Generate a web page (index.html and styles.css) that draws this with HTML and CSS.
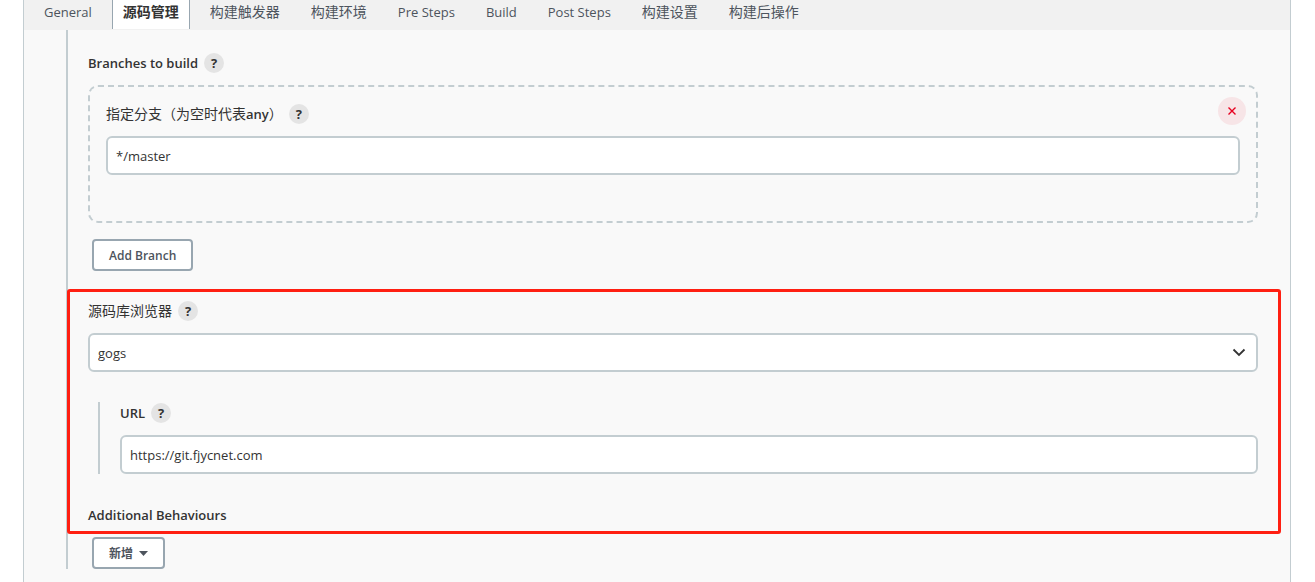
FILE: index.html
```
<!DOCTYPE html>
<html lang="zh-CN">
<head>
  <meta charset="UTF-8">
  <meta name="viewport" content="width=device-width, initial-scale=1.0">
  <title>源码管理</title>
  <link rel="stylesheet" href="styles.css">
</head>
<body>
  <main class="panel">
    <nav class="tabs">
      <a class="tab" href="#">General</a>
      <a class="tab tab-zh active" href="#">源码管理</a>
      <a class="tab tab-zh" href="#">构建触发器</a>
      <a class="tab tab-zh" href="#">构建环境</a>
      <a class="tab" href="#">Pre Steps</a>
      <a class="tab" href="#">Build</a>
      <a class="tab" href="#">Post Steps</a>
      <a class="tab tab-zh" href="#">构建设置</a>
      <a class="tab tab-zh" href="#">构建后操作</a>
    </nav>

    <form class="scm">
      <div class="label-row">
        <span class="label">Branches to build</span>
        <a class="help" href="#">?</a>
      </div>

      <div class="branch">
        <button class="delete" type="button" aria-label="Delete">
          <svg width="8" height="8" viewBox="0 0 8 8"><path d="M0.5 0.5 L7.5 7.5 M7.5 0.5 L0.5 7.5" stroke="#e6001f" stroke-width="1.4" fill="none"/></svg>
        </button>
        <div class="label-row">
          <label class="label" for="branch"><span class="zh">指定分支（为空时代表</span>any<span class="zh">）</span></label>
          <a class="help" href="#">?</a>
        </div>
        <input class="field" type="text" id="branch" value="*/master">
      </div>

      <button class="btn" type="button">Add Branch</button>

      <!-- repository browser -->
      <section class="browser">
        <div class="label-row">
          <label class="label" for="browser"><span class="zh">源码库浏览器</span></label>
          <a class="help" href="#">?</a>
        </div>
        <div class="select-wrap">
          <select class="field" id="browser">
            <option>gogs</option>
          </select>
          <svg class="chevron" width="14" height="9" viewBox="0 0 14 9"><path d="M1.5 1.5 L7 7 L12.5 1.5" stroke="#333" stroke-width="1.8" fill="none"/></svg>
        </div>

        <div class="nested">
          <div class="label-row">
            <label class="label" for="url">URL</label>
            <a class="help" href="#">?</a>
          </div>
          <input class="field" type="text" id="url" value="https://git.fjycnet.com">
        </div>

        <div class="label-row">
          <span class="label">Additional Behaviours</span>
        </div>
        <div class="highlight"></div>
      </section>

      <button class="btn" type="button">新增
        <svg width="9" height="5" viewBox="0 0 9 5"><path d="M0 0 H9 L4.5 5 Z" fill="#4d545d"/></svg>
      </button>
    </form>
  </main>
</body>
</html>
```
FILE: styles.css
```
* {
  box-sizing: border-box;
}
body {
  margin: 0;
  font-family: "Open Sans", "Noto Sans CJK SC", sans-serif;
  font-size: 13px;
  color: #333;
  background: #fff;
}
.panel {
  margin: 0 24px 0 23px;
  min-height: 100vh;
  background: #f9f9f9;
  border: solid #c3cdd1;
  border-width: 0 1px;
}

/* tabs */
.tabs {
  display: flex;
  gap: 9px;
  height: 30px;
  padding: 0 9px 1px;
  background: #f1f1f1;
}
.tab {
  padding: 0 10px;
  border: solid transparent;
  border-width: 0 1px;
  line-height: 24px;
  color: #4d545d;
  text-decoration: none;
  white-space: nowrap;
}
.tab-zh {
  font-size: 14px;
}
.tab.active {
  background: #fff;
  border-color: #98a6b0;
  color: #333;
  font-weight: 700;
}

/* form */
.scm {
  margin-left: 42px;
  margin-right: 32px;
  padding: 23px 0 0 20px;
  border-left: 2px solid #c3cdd1;
}
.label-row {
  display: flex;
  align-items: center;
  gap: 6px;
  height: 20px;
}
.label {
  font-weight: 600;
  line-height: 20px;
}
.zh {
  font-size: 14px;
  font-weight: 400;
}
.help {
  width: 20px;
  height: 20px;
  border-radius: 50%;
  background: #e4e4e4;
  color: #333;
  font-weight: 700;
  line-height: 20px;
  text-align: center;
  text-decoration: none;
}
.field {
  display: block;
  width: 100%;
  height: 39px;
  margin-top: 12px;
  padding: 0 8px;
  border: 2px solid #c3cdd1;
  border-radius: 6px;
  background: #fff;
  color: #333;
  font: inherit;
  appearance: none;
}
.branch {
  position: relative;
  margin: 12px 0 16px;
  padding: 17px 16px 46px;
  border: 2px dashed #c3cdd1;
  border-radius: 10px;
}
.delete {
  position: absolute;
  top: 10px;
  right: 10px;
  display: flex;
  align-items: center;
  justify-content: center;
  width: 28px;
  height: 28px;
  padding: 0;
  border: none;
  border-radius: 50%;
  background: #f7e5e7;
}
.btn {
  display: flex;
  align-items: center;
  gap: 6px;
  height: 32px;
  margin-left: 4px;
  padding: 0 15px;
  border: 2px solid #98a6b0;
  border-radius: 4px;
  background: #fff;
  color: #4d545d;
  font-family: inherit;
  font-size: 12px;
  font-weight: 600;
}
.browser {
  position: relative;
  margin: 30px 0 12px;
}
.select-wrap {
  position: relative;
}
.chevron {
  position: absolute;
  right: 12px;
  top: 15px;
  pointer-events: none;
}
.nested {
  margin: 30px 0 31px 10px;
  padding: 1px 0 0 20px;
  border-left: 2px solid #c3cdd1;
}
.highlight {
  position: absolute;
  top: -12px;
  right: -23px;
  bottom: -9px;
  left: -21px;
  border: 3px solid #ff1f12;
  border-radius: 3px;
  pointer-events: none;
}
```
